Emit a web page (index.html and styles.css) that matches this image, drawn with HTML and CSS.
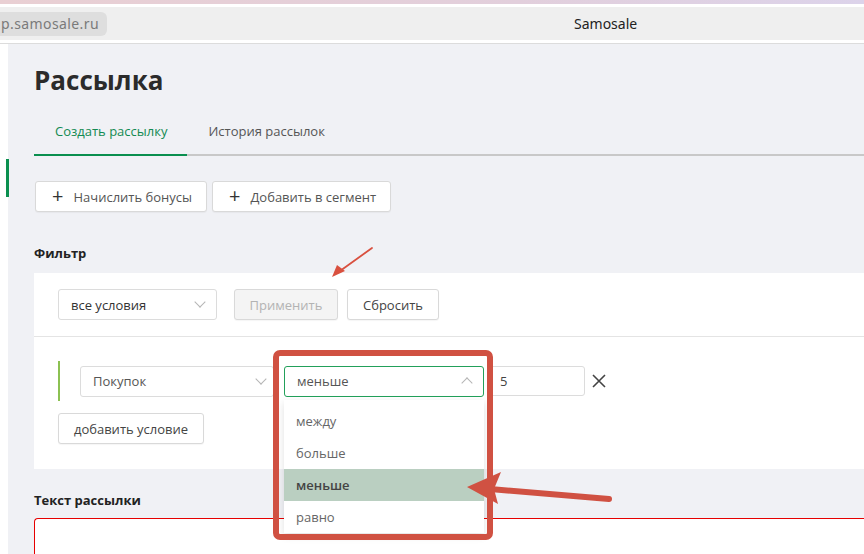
FILE: index.html
```html
<!DOCTYPE html>
<html lang="ru">

<head>
  <meta charset="UTF-8">
  <meta name="viewport" content="width=device-width, initial-scale=1.0">
  <title>Samosale</title>
  <link rel="stylesheet" href="styles.css">
</head>

<body>
  <div class="top-strip"></div>
  <div class="browser-bar">
    <div class="url-pill">p.samosale.ru</div>
    <div class="browser-title">Samosale</div>
  </div>

  <div class="app">
    <div class="sidebar">
      <div class="sidebar-marker"></div>
    </div>

    <div class="main">
      <h1 class="page-title">Рассылка</h1>

      <div class="tabs">
        <div class="tab active">Создать рассылку</div>
        <div class="tab">История рассылок</div>
      </div>

      <div class="actions">
        <button class="btn btn-icon"><span class="plus">+</span>Начислить бонусы</button>
        <button class="btn btn-icon"><span class="plus">+</span>Добавить в сегмент</button>
      </div>

      <div class="section-label">Фильтр</div>

      <div class="filter-panel">
        <div class="filter-head">
          <div class="select select-mode">
            <span>все условия</span>
            <span class="chevron"></span>
          </div>
          <button class="btn btn-disabled">Применить</button>
          <button class="btn btn-reset">Сбросить</button>
        </div>

        <div class="filter-body">
          <div class="condition">
            <div class="condition-bar"></div>
            <div class="select select-field">
              <span>Покупок</span>
              <span class="chevron"></span>
            </div>
            <div class="select-wrap">
              <div class="select select-op open">
                <span>меньше</span>
                <span class="chevron up"></span>
              </div>
              <ul class="dropdown">
                <li>между</li>
                <li>больше</li>
                <li class="selected">меньше</li>
                <li>равно</li>
              </ul>
            </div>
            <div class="input-value">5</div>
            <span class="remove">
              <svg width="14" height="14" viewBox="0 0 14 14">
                <path d="M1 1 L13 13 M13 1 L1 13" stroke="#444" stroke-width="1.6" fill="none" />
              </svg>
            </span>
          </div>
          <button class="btn btn-add">добавить условие</button>
        </div>
      </div>

      <div class="section-label text-label">Текст рассылки</div>
      <div class="textarea"></div>
    </div>
  </div>

  <!-- annotation layer drawn over the screenshot -->
  <svg class="annotations" width="864" height="554" viewBox="0 0 864 554">
    <rect x="276" y="353" width="214" height="184" rx="4" fill="none" stroke="#d05142" stroke-width="6" />
    <line x1="372" y1="248" x2="340" y2="271" stroke="#d9503f" stroke-width="1.8" stroke-linecap="round" />
    <polygon points="332,277 337,265 345,271" fill="#d9503f" />
    <line x1="609" y1="499" x2="490" y2="489" stroke="#d05142" stroke-width="6" stroke-linecap="round" />
    <polygon points="467,487 501,472 494,489 498,504" fill="#d05142" />
  </svg>
</body>

</html>
```

FILE: styles.css
```css
body {
  margin: 0;
  width: 864px;
  height: 554px;
  overflow: hidden;
  background-color: #ffffff;
  font-family: "Open Sans", "Noto Sans", sans-serif;
  position: relative;
}

.top-strip {
  height: 4px;
  background: linear-gradient(90deg, #e9cfd3 0%, #e2cfdc 60%, #dcd3ea 100%);
}

.browser-bar {
  margin-top: 3px;
  height: 33px;
  background-color: #efefef;
  display: flex;
  align-items: center;
  position: relative;
  border-bottom: 3px solid #ffffff;
  box-shadow: 0 1px 0 #dcdcdc;
  font-family: "Noto Sans", sans-serif;
}

.url-pill {
  height: 24px;
  line-height: 24px;
  padding: 0 8px 0 1px;
  background-color: #dedede;
  border-radius: 0 6px 6px 0;
  color: #7a7a7a;
  font-size: 14px;
  letter-spacing: 0.4px;
}

.browser-title {
  position: absolute;
  left: 574px;
  top: 0;
  line-height: 33px;
  font-size: 14px;
  color: #222;
}

.app {
  display: flex;
  margin-top: 1px;
  height: 520px;
}

.sidebar {
  width: 8px;
  background-color: #ffffff;
  flex-shrink: 0;
  position: relative;
}

.sidebar-marker {
  margin-top: 115px;
  margin-left: 6px;
  width: 3px;
  height: 38px;
  background-color: #0a8f4f;
}

.main {
  flex: 1;
  background-color: #f0f1f5;
  padding: 18px 0 0 26px;
  overflow: hidden;
}

.page-title {
  margin: 0;
  font-size: 26px;
  line-height: 36px;
  font-weight: 700;
  color: #2b2b2b;
}

.tabs {
  margin-top: 12px;
  display: flex;
  border-bottom: 2px solid #c8c8c8;
}

.tab {
  padding: 12px 20px 14px 21px;
  font-size: 13px;
  line-height: 18px;
  color: #555;
}

.tab.active {
  color: #138a52;
  border-bottom: 2px solid #0a8f4f;
  margin-bottom: -2px;
}

.actions {
  margin-top: 25px;
  display: flex;
  gap: 5px;
  margin-left: 1px;
}

.btn {
  font-family: inherit;
  height: 31px;
  padding: 0 13px;
  background: #ffffff;
  border: 1px solid #d9d9d9;
  border-radius: 3px;
  font-size: 13px;
  color: #555;
  display: flex;
  align-items: center;
  box-shadow: 0 1px 1px rgba(0, 0, 0, 0.04);
}

.btn-icon {
  padding: 0 14px 0 16px;
}

.plus {
  font-size: 20px;
  font-weight: 400;
  color: #333;
  margin-right: 10px;
  line-height: 20px;
  margin-top: -2px;
}

.section-label {
  margin-top: 32px;
  font-size: 13px;
  line-height: 18px;
  font-weight: 700;
  color: #222;
}

.filter-panel {
  margin-top: 11px;
  background-color: #ffffff;
}

.filter-head {
  padding: 16px 24px;
  display: flex;
  align-items: center;
  border-bottom: 1px solid #e4e4e4;
}

.select {
  height: 31px;
  box-sizing: border-box;
  border: 1px solid #dcdcdc;
  border-radius: 3px;
  display: flex;
  align-items: center;
  justify-content: space-between;
  padding: 0 12px;
  font-size: 13px;
  color: #444;
  background: #ffffff;
}

.chevron {
  width: 7px;
  height: 7px;
  border-right: 1px solid #b5b5b5;
  border-bottom: 1px solid #b5b5b5;
  transform: rotate(45deg);
  margin-top: -5px;
}

.chevron.up {
  transform: rotate(225deg);
  margin-top: 4px;
}

.select-mode {
  width: 159px;
  color: #333;
}

.btn-disabled {
  margin-left: 17px;
  width: 104px;
  justify-content: center;
  background-color: #f4f4f4;
  color: #b3b3b3;
}

.btn-reset {
  margin-left: 9px;
  width: 92px;
  justify-content: center;
  color: #444;
}

.filter-body {
  padding: 24px 24px 25px;
}

.condition {
  display: flex;
  align-items: center;
  height: 40px;
}

.condition-bar {
  width: 2px;
  height: 40px;
  background-color: #8cc152;
  margin-right: 20px;
}

.select-field {
  width: 194px;
  color: #555;
  padding-right: 8px;
}

.select-wrap {
  position: relative;
  margin-left: 10px;
}

.select-op {
  width: 200px;
  border-color: #22a05a;
  color: #555;
}

.dropdown {
  position: absolute;
  top: 34px;
  left: 0;
  width: 200px;
  margin: 0;
  padding: 5px 0 0;
  list-style: none;
  background: #ffffff;
  box-shadow: 0 3px 8px rgba(0, 0, 0, 0.12);
  z-index: 5;
}

.dropdown li {
  height: 32px;
  line-height: 32px;
  padding-left: 12px;
  font-size: 13px;
  color: #666;
}

.dropdown li.selected {
  background-color: #bacfc1;
  color: #444;
  font-weight: 600;
}

.input-value {
  margin-left: 5px;
  width: 96px;
  height: 30px;
  box-sizing: border-box;
  border: 1px solid #dcdcdc;
  border-radius: 3px;
  padding: 0 10px;
  line-height: 28px;
  font-size: 13px;
  color: #444;
}

.remove {
  margin-left: 7px;
  display: flex;
}

.btn-add {
  margin-top: 12px;
  width: 146px;
  justify-content: center;
  color: #444;
}

.text-label {
  margin-top: 22px;
}

.textarea {
  margin-top: 9px;
  height: 60px;
  background: #ffffff;
  border: 1px solid #e60000;
  border-right: none;
  border-radius: 4px 0 0 0;
}

.annotations {
  position: absolute;
  left: 0;
  top: 0;
  pointer-events: none;
  z-index: 10;
}
```
